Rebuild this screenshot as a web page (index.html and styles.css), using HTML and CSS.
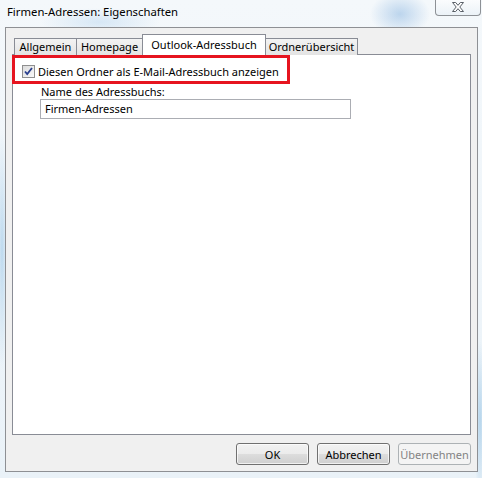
FILE: index.html
```html
<!DOCTYPE html>
<html lang="de">
<head>
    <meta charset="UTF-8">
    <title>Firmen-Adressen: Eigenschaften</title>
    <link rel="stylesheet" href="styles.css">
</head>
<body>
    <div class="window">
        <div class="titlebar">
            <span class="title">Firmen-Adressen: Eigenschaften</span>
            <div class="close-btn">
                <svg width="16" height="12" viewBox="0 0 16 12">
                    <path d="M2.5 1.5h3.2L8 4.3l2.3-2.8h3.2L9.8 6l3.7 4.5h-3.2L8 7.7l-2.3 2.8H2.5L6.2 6z" fill="#fff" stroke="#5a6068" stroke-width="1" stroke-linejoin="round"/>
                </svg>
            </div>
        </div>

        <div class="client">
            <div class="tabs">
                <div class="tab tab-allgemein">Allgemein</div>
                <div class="tab tab-homepage">Homepage</div>
                <div class="tab tab-outlook active">Outlook-Adressbuch</div>
                <div class="tab tab-ordner">Ordnerübersicht</div>
            </div>

            <div class="panel">
                <label class="check-row">
                    <span class="checkbox">
                        <svg width="13" height="13" viewBox="0 0 13 13">
                            <path d="M3 6.5l2.2 2.6L10 3" fill="none" stroke="#2a3f8e" stroke-width="1.8"/>
                        </svg>
                    </span>
                    <span>Diesen Ordner als E-Mail-Adressbuch anzeigen</span>
                </label>
                <div class="field">
                    <div class="field-label">Name des Adressbuchs:</div>
                    <div class="text-input">Firmen-Adressen</div>
                </div>
                <div class="highlight"></div>
            </div>

            <div class="buttons">
                <button class="btn">OK</button>
                <button class="btn">Abbrechen</button>
                <button class="btn disabled">Übernehmen</button>
            </div>
        </div>
    </div>
</body>
</html>
```

FILE: styles.css
```css
:root {
    --face: #f0f0f0;
    --frame-line: #8e9094;
    --tab-line: #898c95;
    --text: #000000;
}

* {
    margin: 0;
    padding: 0;
    box-sizing: border-box;
}

body {
    width: 482px;
    height: 478px;
    overflow: hidden;
    font-family: "Noto Sans", "Open Sans", sans-serif;
    font-size: 11px;
    color: var(--text);
    background:
        radial-gradient(ellipse 30px 22px at 400px 14px, rgba(120, 170, 220, 0.45), transparent),
        radial-gradient(ellipse 60px 14px at 100px 22px, rgba(160, 200, 235, 0.35), transparent),
        radial-gradient(ellipse 6px 120px at 2px 250px, rgba(130, 185, 225, 0.45), transparent),
        radial-gradient(ellipse 6px 80px at 480px 420px, rgba(130, 185, 225, 0.5), transparent),
        linear-gradient(180deg, #f4f8fb 0%, #eaf2f8 100%);
}

.window {
    height: 100%;
    display: flex;
    flex-direction: column;
    padding: 0 4px 6px 5px;
}

.titlebar {
    height: 27px;
    display: flex;
    align-items: flex-start;
    justify-content: space-between;
}

.title {
    padding: 5px 0 0 2px;
    font-size: 11.3px;
    line-height: 14px;
}

.close-btn {
    width: 46px;
    height: 17px;
    margin: -1px -3px 0 0;
    border: 1px solid #8d9196;
    border-top: none;
    border-radius: 0 0 4px 4px;
    background: linear-gradient(180deg, rgba(255, 255, 255, 0.7), rgba(230, 238, 245, 0.6));
    display: flex;
    align-items: center;
    justify-content: center;
}

.client {
    flex: 1;
    background: var(--face);
    border: 1px solid var(--frame-line);
    padding: 6px 6px 0 6px;
    display: flex;
    flex-direction: column;
}

.tabs {
    height: 21px;
    display: flex;
    align-items: flex-end;
    padding-left: 3px;
    position: relative;
    z-index: 1;
    margin-bottom: -1px;
}

.tab {
    height: 17px;
    border: 1px solid var(--tab-line);
    border-bottom: none;
    background: linear-gradient(180deg, #f3f3f3, #e3e3e3);
    text-align: center;
    line-height: 16px;
    margin-left: -1px;
}

.tab-allgemein { width: 63px; }
.tab-homepage { width: 67px; }
.tab-outlook { width: 124px; }
.tab-ordner { width: 93px; }

.tab.active {
    height: 21px;
    background: #ffffff;
    line-height: 20px;
    padding-bottom: 2px;
}

.panel {
    position: relative;
    height: 381px;
    background: #ffffff;
    border: 1px solid var(--tab-line);
    padding: 9px 9px 0 9px;
}

.check-row {
    display: flex;
    align-items: center;
    gap: 3px;
    height: 14px;
}

.checkbox {
    width: 13px;
    height: 13px;
    border: 1px solid #8f8f8f;
    background: linear-gradient(135deg, #dcdcdc, #f8f8f8);
    display: flex;
}

.checkbox svg {
    margin: -1px;
}

.field {
    padding: 7px 0 0 18px;
}

.field-label {
    line-height: 13px;
    margin-left: 1px;
}

.text-input {
    width: 311px;
    height: 20px;
    margin-top: 1px;
    border: 1px solid #abadb3;
    background: #ffffff;
    padding-left: 4px;
    line-height: 18px;
}

.highlight {
    position: absolute;
    left: -1px;
    top: 0;
    width: 278px;
    height: 29px;
    border: 3px solid #e6141f;
}

.buttons {
    display: flex;
    justify-content: flex-end;
    gap: 8px;
    padding-top: 8px;
}

.btn {
    width: 73px;
    height: 22px;
    font-family: inherit;
    font-size: 11px;
    color: var(--text);
    border: 1px solid #707070;
    border-radius: 3px;
    background: linear-gradient(180deg, #f2f2f2 0%, #ebebeb 50%, #dddddd 51%, #cfcfcf 100%);
    box-shadow: inset 0 0 0 1px rgba(255, 255, 255, 0.7);
}

.btn.disabled {
    color: #838383;
    border-color: #adb2b5;
    background: #f4f4f4;
    box-shadow: none;
}
```
